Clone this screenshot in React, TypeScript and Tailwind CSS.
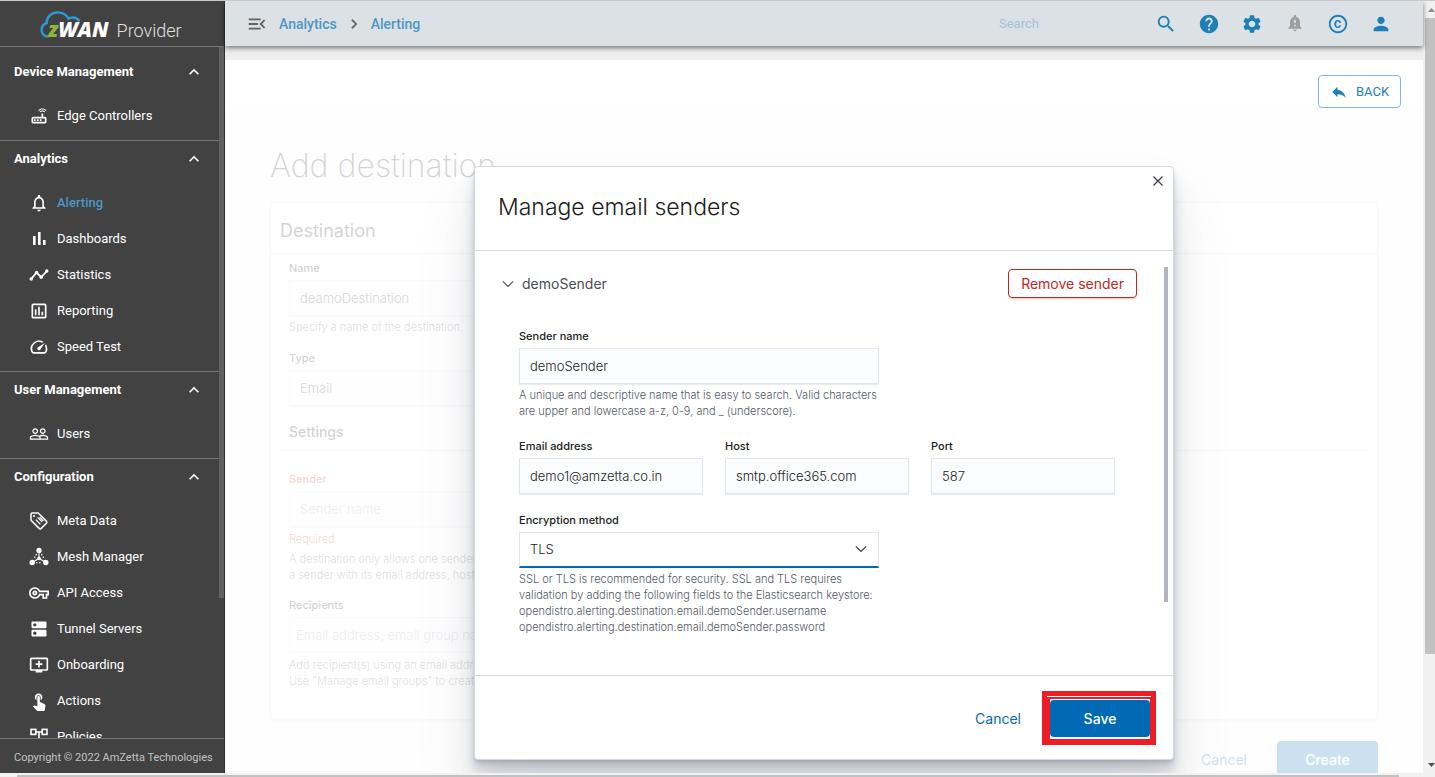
import type { ReactNode } from "react";
import {
  MdAddToQueue,
  MdCopyright,
  MdDns,
  MdHelp,
  MdKeyboardArrowRight,
  MdKeyboardArrowUp,
  MdMenuOpen,
  MdNotificationImportant,
  MdOutlineAssessment,
  MdOutlineNotifications,
  MdOutlineRouter,
  MdOutlineVpnKey,
  MdPeopleOutline,
  MdPerson,
  MdReply,
  MdSearch,
  MdSettings,
  MdSpeed,
  MdTouchApp,
} from "react-icons/md";

const BarsIcon = () => (
  <svg viewBox="0 0 20 20" className="size-5" fill="currentColor" aria-hidden="true">
    <rect x="4" y="7" width="2.6" height="9" />
    <rect x="9" y="3" width="2.6" height="13" />
    <rect x="14" y="11" width="2.6" height="5" />
  </svg>
);

const TrendIcon = () => (
  <svg viewBox="0 0 20 20" className="size-5" fill="none" stroke="currentColor" strokeWidth="1.8" aria-hidden="true">
    <path d="M2 14.200L7.600 7.500 12.200 12.200 18 6" />
    <g fill="currentColor" stroke="none">
      <circle cx="2.200" cy="14" r="1.700" />
      <circle cx="7.600" cy="7.500" r="1.700" />
      <circle cx="12.200" cy="12.200" r="1.700" />
      <circle cx="17.800" cy="6" r="1.700" />
    </g>
  </svg>
);

const TagIcon = () => (
  <svg viewBox="0 0 20 20" className="size-5" fill="none" stroke="currentColor" strokeWidth="1.5" aria-hidden="true">
    <path d="M2 3.2Q2 2 3.2 2H9.2L17.6 10.4Q18.3 11.2 17.6 12L12 17.6Q11.2 18.3 10.4 17.6L2 9.2Z" strokeLinejoin="round" />
    <circle cx="5" cy="5" r="1.1" fill="currentColor" stroke="none" />
    <path d="M8.6 6.4l4.6 4.6M6.8 8.6l4.6 4.8M10.6 6.2l3.8 3.8" strokeWidth="1.2" />
  </svg>
);

const MeshIcon = () => (
  <svg viewBox="0 0 20 20" className="size-5" fill="currentColor" aria-hidden="true">
    <circle cx="10" cy="3.4" r="2.7" />
    <circle cx="3.2" cy="15.5" r="2.7" />
    <circle cx="16.8" cy="15.5" r="2.7" />
    <circle cx="10" cy="11.4" r="1.8" />
    <path d="M10 5v5M4 15l5-3M16 15l-5-3" stroke="currentColor" strokeWidth="1.1" />
    <path d="M7.6 7L5 11.6M12.4 7l2.6 4.6M7 15.8h6" fill="none" stroke="currentColor" strokeWidth="1.1" strokeDasharray="1.600 1.400" />
  </svg>
);

const FlowIcon = () => (
  <svg viewBox="0 0 20 20" className="size-5" fill="none" stroke="currentColor" strokeWidth="1.6" aria-hidden="true">
    <rect x="2" y="2.4" width="4.8" height="5" />
    <rect x="13.2" y="2.4" width="4.8" height="5" />
    <path d="M6.800 5h6.400M10 5v9h3.400" />
    <rect x="13.2" y="12" width="4.8" height="5" />
  </svg>
);

const ChevronDown = () => (
  <svg viewBox="0 0 12 12" className="size-3" fill="none" stroke="currentColor" strokeWidth="1.1" aria-hidden="true">
    <path d="M0.800 3.400l5.200 5 5.200-5" />
  </svg>
);

type Item = { label: string; icon: ReactNode; active?: boolean };

const sections: { title: string; items: Item[] }[] = [
  { title: "Device Management", items: [{ label: "Edge Controllers", icon: <MdOutlineRouter size={20} /> }] },
  {
    title: "Analytics",
    items: [
      { label: "Alerting", icon: <MdOutlineNotifications size={20} />, active: true },
      { label: "Dashboards", icon: <BarsIcon /> },
      { label: "Statistics", icon: <TrendIcon /> },
      { label: "Reporting", icon: <MdOutlineAssessment size={20} /> },
      { label: "Speed Test", icon: <MdSpeed size={20} /> },
    ],
  },
  { title: "User Management", items: [{ label: "Users", icon: <MdPeopleOutline size={20} /> }] },
  {
    title: "Configuration",
    items: [
      { label: "Meta Data", icon: <TagIcon /> },
      { label: "Mesh Manager", icon: <MeshIcon /> },
      { label: "API Access", icon: <MdOutlineVpnKey size={20} /> },
      { label: "Tunnel Servers", icon: <MdDns size={20} /> },
      { label: "Onboarding", icon: <MdAddToQueue size={20} /> },
      { label: "Actions", icon: <MdTouchApp size={20} /> },
      { label: "Policies", icon: <FlowIcon /> },
    ],
  },
];

function Sidebar() {
  return (
    <aside className="flex w-[225px] shrink-0 flex-col border-r border-[#2f2f2f] bg-[#424242] font-[Roboto,sans-serif] text-white">
      <div className="flex h-[46px] shrink-0 items-center border-b border-[#757575] pl-10">
        <div className="relative flex items-baseline pt-3 pl-2 leading-6">
          <svg viewBox="0 0 42 30" className="absolute top-1 left-0 h-[30px] w-[42px]" fill="none" stroke="#2a9bd6" strokeWidth="2.4" aria-hidden="true">
            <path d="M8.5 27.5C4 27.5 1.6 24.6 1.6 21c0-3.600 2-6 5-7C6.500 7.500 11.500 3.400 17.500 3.400c5 0 9 2.400 11 6.200 4.500-2 8.500-.6 11 2.600" />
          </svg>
          <span className="relative font-['Open_Sans',sans-serif] text-[21px] leading-6 font-extrabold italic">
            <span className="text-[#8bb832]">z</span>WAN
          </span>
          <span className="pl-2 text-lg leading-6 font-light text-[#e0e0e0]">Provider</span>
        </div>
      </div>
      <div className="flex min-h-0 flex-1">
        <nav className="min-w-0 flex-1 overflow-hidden">
          {sections.map((s, i) => (
            <section key={s.title} className={i ? "border-t border-[#757575]" : "pt-[7px]"}>
              <button type="button" className="flex h-9 w-full items-center justify-between pr-[15px] pl-[14px] text-[13px] font-bold">
                {s.title}
                <MdKeyboardArrowUp size={20} />
              </button>
              <ul className="pt-2 pb-[6px]">
                {s.items.map((it) => (
                  <li key={it.label}>
                    <a href="#" className="flex h-9 items-center gap-2 pl-[29px] text-[13px]">
                      {it.icon}
                      <span className={it.active ? "font-medium text-[#4a98c5]" : ""}>{it.label}</span>
                    </a>
                  </li>
                ))}
              </ul>
            </section>
          ))}
        </nav>
        <div className="h-[551px] w-[5px] bg-[#616161]" />
      </div>
      <div className="flex h-[35px] shrink-0 items-center border-t border-[#757575] pt-1 pl-[14px] text-[11px] text-[#c2c2c2]">
        Copyright © 2022 AmZetta Technologies
      </div>
    </aside>
  );
}

function Header() {
  const actions = [
    { label: "Search", icon: <MdSearch size={22} /> },
    { label: "Help", icon: <MdHelp size={22} /> },
    { label: "Settings", icon: <MdSettings size={22} /> },
    { label: "Notifications", icon: <MdNotificationImportant size={20} className="text-[#9e9e9e]" /> },
    { label: "License", icon: <MdCopyright size={22} /> },
    { label: "Account", icon: <MdPerson size={22} /> },
  ];
  return (
    <header className="relative z-10 flex h-[45px] shrink-0 items-center bg-[#dce1e5] pr-[21px] pl-[21px] font-[Roboto,sans-serif] shadow-[0_2px_5px_rgba(0,0,0,0.5)]">
      <button type="button" aria-label="Collapse menu" className="text-[#616161]">
        <MdMenuOpen size={22} />
      </button>
      <div className="flex items-center pl-[11px] text-sm font-medium text-[#4a98c2]">
        <a href="#">Analytics</a>
        <MdKeyboardArrowRight size={20} className="mx-[7px] text-[#616161]" />
        <a href="#">Alerting</a>
      </div>
      <input
        aria-label="Search"
        placeholder="Search"
        className="ml-auto w-[145px] bg-transparent text-[13px] text-[#1d7fb3] outline-none placeholder:text-[#9cc3da]"
      />
      <div className="flex">
        {actions.map((a) => (
          <button key={a.label} type="button" aria-label={a.label} className="flex w-[43px] justify-center text-[#1d7fb3]">
            {a.icon}
          </button>
        ))}
      </div>
    </header>
  );
}

const field =
  "block h-9 w-full border border-[#e2e5ee] bg-[#fbfcfd] px-[10px] text-[13px] font-light text-[#1a1c21] shadow-[0_1px_1px_rgba(152,162,179,0.2)] outline-none placeholder:text-[#98a2b3]";
const fieldLabel = "block pb-1 text-[11px] leading-4 font-medium";
const help = "text-[11px] leading-4 font-light whitespace-nowrap";

function DestinationForm() {
  return (
    <div className="px-[45px] pt-[38px]">
      <h1 className="text-[32px] leading-10 font-extralight text-[#1a1c21]">Add destination</h1>
      <div className="mt-4 h-[518px] rounded border border-[#d3dae6] bg-white px-[9px] text-[#1a1c21] shadow-[0_2px_2px_-1px_rgba(152,162,179,0.3)]">
        <h2 className="-mx-[9px] flex h-[51px] items-center border-b border-[#d3dae6] px-[9px] pt-[6px] text-lg">Destination</h2>
        <div className="w-[360px] pt-[6px] pl-[9px]">
          <label htmlFor="dest-name" className={fieldLabel}>Name</label>
          <input id="dest-name" defaultValue="deamoDestination" className={field} />
          <p className={`${help} pt-[3px] text-[#535966]`}>Specify a name of the destination.</p>
          <label htmlFor="dest-type" className={`${fieldLabel} pt-[15px]`}>Type</label>
          <input id="dest-type" defaultValue="Email" className={field} />
        </div>
        <h3 className="border-b border-[#d3dae6] pt-4 pb-2 pl-[9px] text-sm leading-5 font-medium">Settings</h3>
        <div className="w-[360px] pt-5 pl-[9px]">
          <label htmlFor="dest-sender" className={`${fieldLabel} text-[#bd271e]`}>Sender</label>
          <input id="dest-sender" placeholder="Sender name" className={field} />
          <p className={`${help} pt-1 text-[#bd271e]`}>Required</p>
          <p className={`${help} pt-1 text-[#535966]`}>
            A destination only allows one sender.
            <br />a sender with its email address, host
          </p>
          <label htmlFor="dest-recipients" className={`${fieldLabel} pt-[14px]`}>Recipients</label>
          <input
            id="dest-recipients"
            placeholder="Email address, email group name"
            className="block h-9 w-full border border-[#e2e5ee] bg-[#fbfcfd] px-[6px] text-[13px] font-light outline-none placeholder:text-[#98a2b3]"
          />
          <p className={`${help} pt-1 text-[#535966]`}>
            Add recipient(s) using an email address
            <br />
            Use "Manage email groups" to create
          </p>
        </div>
      </div>
      <div className="flex items-center justify-end gap-[30px] pt-[21px] text-sm">
        <button type="button" className="text-[#006bb4]">Cancel</button>
        <button type="button" className="h-[38px] w-[101px] rounded bg-[#006bb4] font-medium text-white">Create</button>
      </div>
    </div>
  );
}

function SenderField({ id, label, value }: { id: string; label: string; value: string }) {
  return (
    <div>
      <label htmlFor={id} className={`${fieldLabel} text-[#1a1c21]`}>{label}</label>
      <input id={id} defaultValue={value} className={field} />
    </div>
  );
}

function SendersModal() {
  return (
    <div
      role="dialog"
      aria-labelledby="senders-title"
      className="relative flex h-[594px] w-[700px] flex-col rounded border border-[#d3dae6] bg-white shadow-[0_40px_64px_0_rgba(65,78,101,0.1),0_24px_32px_0_rgba(65,78,101,0.1),0_16px_16px_0_rgba(65,78,101,0.1),0_8px_8px_0_rgba(65,78,101,0.1),0_4px_4px_0_rgba(65,78,101,0.1),0_2px_2px_0_rgba(65,78,101,0.1)]"
    >
      <button type="button" aria-label="Close" className="absolute top-2 right-[9px] text-[#343741]">
        <svg viewBox="0 0 12 12" className="size-3" fill="none" stroke="currentColor" strokeWidth="1.1" aria-hidden="true">
          <path d="M1.500 1.500l9 9M10.500 1.500l-9 9" />
        </svg>
      </button>
      <div className="flex h-[84px] shrink-0 items-center border-b border-[#d3dae6] pb-[2px] pl-[23px]">
        <h2 id="senders-title" className="text-[23px] font-light text-[#1a1c21]">Manage email senders</h2>
      </div>
      <div className="flex min-h-0 flex-1 items-start pt-4 pr-[5px]">
        <div className="flex-1 pr-[27px] pl-[27px]">
          <div className="flex items-center justify-between pt-[2px]">
            <button type="button" aria-expanded="true" className="flex items-center gap-2 text-sm text-[#4a4d57]">
              <ChevronDown />
              demoSender
            </button>
            <button type="button" className="h-[29px] rounded border border-[#bd271e] px-3 text-sm text-[#bd271e] shadow-[0_2px_2px_-1px_rgba(189,39,30,0.3)]">
              Remove sender
            </button>
          </div>
          <div className="pt-[30px] pr-[22px] pl-[17px]">
            <div className="w-[360px]">
              <SenderField id="sender-name" label="Sender name" value="demoSender" />
              <p className={`${help} pt-[3px] text-[#535966]`}>
                A unique and descriptive name that is easy to search. Valid characters
                <br />
                are upper and lowercase a-z, 0-9, and _ (underscore).
              </p>
            </div>
            <div className="grid grid-cols-3 gap-[22px] pt-[19px]">
              <SenderField id="sender-email" label="Email address" value="demo1@amzetta.co.in" />
              <SenderField id="sender-host" label="Host" value="smtp.office365.com" />
              <SenderField id="sender-port" label="Port" value="587" />
            </div>
            <div className="w-[360px] pt-[18px]">
              <label htmlFor="sender-encryption" className={`${fieldLabel} text-[#1a1c21]`}>Encryption method</label>
              <div className="relative">
                <select
                  id="sender-encryption"
                  defaultValue="TLS"
                  className="block h-9 w-full appearance-none border border-b-2 border-[#e2e5ee] border-b-[#006bb4] bg-white px-[10px] text-[13px] font-light text-[#1a1c21] outline-none"
                >
                  <option>None</option>
                  <option>SSL</option>
                  <option>TLS</option>
                </select>
                <span className="pointer-events-none absolute top-[11px] right-3 text-[#343741]">
                  <ChevronDown />
                </span>
              </div>
              <p className={`${help} pt-[3px] text-[#535966]`}>
                SSL or TLS is recommended for security. SSL and TLS requires
                <br />
                validation by adding the following fields to the Elasticsearch keystore:
                <br />
                opendistro.alerting.destination.email.demoSender.username
                <br />
                opendistro.alerting.destination.email.demoSender.password
              </p>
            </div>
          </div>
        </div>
        <div className="h-[335px] w-1 bg-[#b2b5bf]" />
      </div>
      <div className="flex h-[84px] shrink-0 items-center justify-end gap-[29px] border-t border-[#d3dae6] pt-[2px] pr-[23px] text-sm">
        <button type="button" className="text-[#006bb4]">Cancel</button>
        <div className="relative">
          <button type="button" className="block h-[37px] w-[100px] rounded bg-[#006bb4] font-medium text-white">Save</button>
          <div className="pointer-events-none absolute -top-[9px] -right-[6px] -bottom-2 -left-2 border-t-8 border-r-[6px] border-b-[6px] border-l-8 border-[#ee1c25]">
            <div className="absolute -top-[3px] -right-px -left-[3px] h-px bg-white" />
          </div>
        </div>
      </div>
    </div>
  );
}

export default function App() {
  return (
    <div className="flex h-screen flex-col overflow-hidden border-t border-[#c8c8c8] bg-[#f1f1f1]">
      <div className="flex min-h-0 flex-1">
        <Sidebar />
        <div className="flex min-w-0 flex-1 flex-col bg-[#eeeeee]">
          <Header />
          <main className="mt-[14px] flex min-h-0 flex-1 flex-col bg-white">
            <div className="flex h-12 shrink-0 items-end justify-end pr-[22px]">
              <button
                type="button"
                className="flex h-[33px] w-[83px] items-center justify-center gap-2 rounded border border-[#83b9d5] font-[Roboto,sans-serif] text-[13px] text-[#1d7fb3]"
              >
                <MdReply size={18} />
                BACK
              </button>
            </div>
            <div className="relative min-h-0 flex-1 overflow-hidden bg-[#f9f9fa] font-[Inter,sans-serif]">
              <DestinationForm />
              <div className="absolute inset-0 flex items-start justify-center bg-white/80 pt-[58px]">
                <SendersModal />
              </div>
            </div>
          </main>
        </div>
        <div className="flex w-3 shrink-0 flex-col items-end bg-[#f1f1f1]">
          <div className="flex h-[17px] w-[10px] items-center justify-end overflow-hidden">
            <svg viewBox="0 0 7 4" className="h-1 w-[7px]" fill="#8c8c8c" aria-hidden="true">
              <path d="M0 4l3.500-4L7 4z" />
            </svg>
          </div>
          <div className="min-h-0 w-[10px] flex-1">
            <div className="h-[636px] bg-[#c1c1c1]" />
          </div>
          <div className="flex h-[17px] w-[10px] items-center justify-end">
            <svg viewBox="0 0 7 4" className="h-1 w-[7px]" fill="#505050" aria-hidden="true">
              <path d="M0 0l3.500 4L7 0z" />
            </svg>
          </div>
        </div>
      </div>
      <div className="h-1 shrink-0 bg-[#f1f1f1] pt-[2px] pr-9 pl-[17px]">
        <div className="h-[2px] bg-[#c1c1c1]" />
      </div>
    </div>
  );
}
